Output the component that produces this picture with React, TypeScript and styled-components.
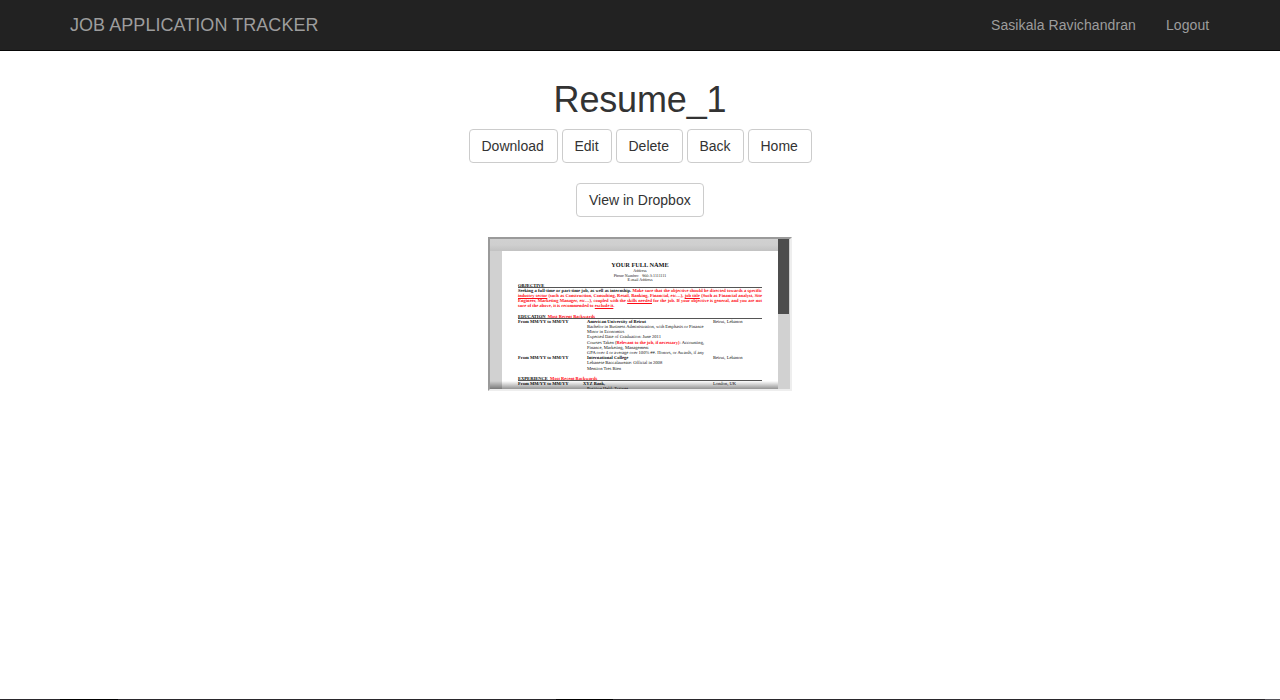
import React from "react";
import styled, { createGlobalStyle, css } from "styled-components";

const GlobalStyle = createGlobalStyle`
  * { box-sizing: border-box; }
  body {
    margin: 0;
    background: #fff;
    color: #333;
    font: 14px/20px "Liberation Sans", Arial, sans-serif;
    overflow: hidden;
  }
`;

const Screen = styled.div`
  display: flex;
  flex-direction: column;
  height: 700px;
`;

const Navbar = styled.nav`
  height: 51px;
  flex: none;
  display: flex;
  justify-content: space-between;
  padding: 0 70px;
  background: #222;
  border-bottom: 1px solid #080808;
`;

const Brand = styled.a`
  padding: 15px 0;
  color: #9d9d9d;
  font-size: 18px;
  letter-spacing: 0.05px;
`;

const NavLinks = styled.div`
  display: flex;
  gap: 30px;
`;

const NavLink = styled.a<{ $width: number }>`
  width: ${(p) => p.$width}px;
  padding: 15px 0;
  color: #9d9d9d;
  letter-spacing: 0.08px;
  white-space: nowrap;
`;

const Main = styled.main`
  flex: 1;
  display: flex;
  flex-direction: column;
  align-items: center;
  padding-top: 29px;
`;

const Title = styled.h1`
  margin: 0 0 10px;
  font-size: 36px;
  line-height: 39px;
  font-weight: 400;
  letter-spacing: -0.15px;
`;

const ButtonRow = styled.div`
  display: flex;
  gap: 4px;
  margin-bottom: 20px;
`;

const Button = styled.button<{ $width: number }>`
  width: ${(p) => p.$width}px;
  height: 34px;
  padding: 6px 0 6px 12px;
  border: 1px solid #ccc;
  border-radius: 4px;
  background: #fff;
  color: #333;
  font: inherit;
  text-align: left;
  white-space: nowrap;
`;

const Frame = styled.section`
  display: flex;
  width: 304px;
  height: 154px;
  border: 2px solid;
  border-color: #9a9a9a #eee #eee #9a9a9a;
  background: #d1d1d1;
  overflow: hidden;
`;

const Viewer = styled.div`
  position: relative;
  flex: 1;
  padding: 12px 0 0 12px;
  overflow: hidden;
  background: linear-gradient(#d1d1d1 0, #cfcfcf 6px, #c2c2c2 12px, #d1d1d1 12px);
`;

const Scrollbar = styled.div`
  width: 12px;
  background: #d1d1d1;
`;

const Thumb = styled.div`
  width: 11px;
  height: 75px;
  background: #4d4d4d;
`;

const BottomShade = styled.div`
  position: absolute;
  inset: auto 0 0 0;
  height: 8px;
  background: linear-gradient(rgba(0, 0, 0, 0), rgba(0, 0, 0, 0.42));
`;

const Paper = styled.article`
  height: 180px;
  padding: 11.5px 16px 0;
  background: #fff;
  color: #111;
  font: 4.55px/5.2px "Liberation Serif", "Times New Roman", serif;
  text-rendering: geometricPrecision;
  white-space: nowrap;
`;

const FullName = styled.div`
  height: 6.7px;
  font-size: 6.3px;
  font-weight: 700;
  line-height: 6.5px;
  text-align: center;
`;

const Contact = styled.div`
  height: 4.5px;
  font-size: 4.05px;
  line-height: 4.6px;
  text-align: center;
`;

const Heading = styled.div<{ $gap?: number }>`
  height: 5px;
  margin-top: ${(p) => p.$gap ?? 0}px;
  line-height: 5px;
  font-weight: 700;
  border-bottom: 1px solid #555;
`;

const Justified = styled.div<{ $last?: boolean }>`
  height: 5.2px;
  font-weight: 700;
  ${(p) => !p.$last && css`text-align-last: justify;`}
`;

const Red = styled.span`
  color: #ff0a14;
`;

const Entry = styled.div<{ $bold?: boolean; $indent?: number }>`
  display: grid;
  grid-template-columns: ${(p) => p.$indent ?? 69}px ${(p) => 195 - (p.$indent ?? 69)}px auto;
  height: 5.2px;
  > :first-child { font-weight: 700; }
  > :nth-child(2) { font-weight: ${(p) => (p.$bold ? 700 : 400)}; }
`;

const RedBold = styled(Red)`
  font-weight: 700;
`;

const Taskbar = styled.footer`
  height: 1px;
  flex: none;
  background: linear-gradient(
    90deg,
    #29272b 60px, #000 60px, #000 118px, #29272b 118px,
    #29272b 556px, #000 556px, #000 613px, #29272b 613px,
    #29272b 1265px, #55535a 1265px
  );
`;

type EntryData = {
  date?: string;
  text: React.ReactNode;
  place?: string;
  bold?: boolean;
  indent?: number;
};

const actions = [
  { label: "Download", width: 89 },
  { label: "Edit", width: 50 },
  { label: "Delete", width: 67 },
  { label: "Back", width: 57 },
  { label: "Home", width: 64 },
];

const education: EntryData[] = [
  { date: "From MM/YY to MM/YY", text: "American University of Beirut", place: "Beirut, Lebanon", bold: true },
  { text: "Bachelor in Business Administration, with Emphasis or Finance" },
  { text: "Minor in Economics" },
  { text: "Expected Date of Graduation: June 2011" },
  { text: <>Courses Taken (<RedBold>Relevant to the job, if necessary)</RedBold>: Accounting,</> },
  { text: "Finance, Marketing, Management" },
  { text: "GPA over 4 or average over 100% ##. Honors, or Awards, if any" },
  { date: "From MM/YY to MM/YY", text: "International College", place: "Beirut, Lebanon", bold: true },
  { text: "Lebanese Baccalaureate: Official in 2008" },
  { text: "Mention Tres Bien" },
];

const experience: EntryData[] = [
  { date: "From MM/YY to MM/YY", text: "XYZ Bank,", place: "London, UK", bold: true, indent: 65 },
  { text: "Position Held: Trainee" },
];

const Entries = ({ items }: { items: EntryData[] }) => (
  <>
    {items.map((item, i) => (
      <Entry key={i} $bold={item.bold} $indent={item.indent}>
        <span>{item.date}</span>
        <span>{item.text}</span>
        <span>{item.place}</span>
      </Entry>
    ))}
  </>
);

const Resume = () => (
  <Paper>
    <FullName>YOUR FULL NAME</FullName>
    <Contact>Address</Contact>
    <Contact>Phone Number: &nbsp; 960-3-1111111</Contact>
    <Contact>E-mail Address</Contact>
    <Heading $gap={0.2}>OBJECTIVE</Heading>
    <Justified>
      Seeking a full-time or part-time job, as well as internship. <Red>Make sure that the objective should be directed towards a specific</Red>
    </Justified>
    <Justified>
      <Red><u>industry sector</u> (such as Construction, Consulting, Retail, Banking, Financial, etc…), <u>job title</u> (Such as Financial analyst, Site</Red>
    </Justified>
    <Justified>
      <Red>Engineer, Marketing Manager, etc…), coupled with the <u>skills needed</u> for the job. If your objective is general, and you are not</Red>
    </Justified>
    <Justified $last>
      <Red>sure of the above, it is recommended to <u>exclude it</u>.</Red>
    </Justified>
    <Heading $gap={5.2}>EDUCATION <Red>&nbsp;Most Recent Backwards</Red></Heading>
    <Entries items={education} />
    <Heading $gap={5.1}>EXPERIENCE <Red>&nbsp;Most Recent Backwards</Red></Heading>
    <Entries items={experience} />
  </Paper>
);

export default function App() {
  return (
    <Screen>
      <GlobalStyle />
      <Navbar>
        <Brand>JOB APPLICATION TRACKER</Brand>
        <NavLinks>
          <NavLink $width={145}>Sasikala Ravichandran</NavLink>
          <NavLink $width={44}>Logout</NavLink>
        </NavLinks>
      </Navbar>
      <Main>
        <Title>Resume_1</Title>
        <ButtonRow>
          {actions.map(({ label, width }) => (
            <Button key={label} $width={width}>{label}</Button>
          ))}
        </ButtonRow>
        <ButtonRow>
          <Button $width={128}>View in Dropbox</Button>
        </ButtonRow>
        <Frame>
          <Viewer>
            <Resume />
            <BottomShade />
          </Viewer>
          <Scrollbar>
            <Thumb />
          </Scrollbar>
        </Frame>
      </Main>
      <Taskbar />
    </Screen>
  );
}
